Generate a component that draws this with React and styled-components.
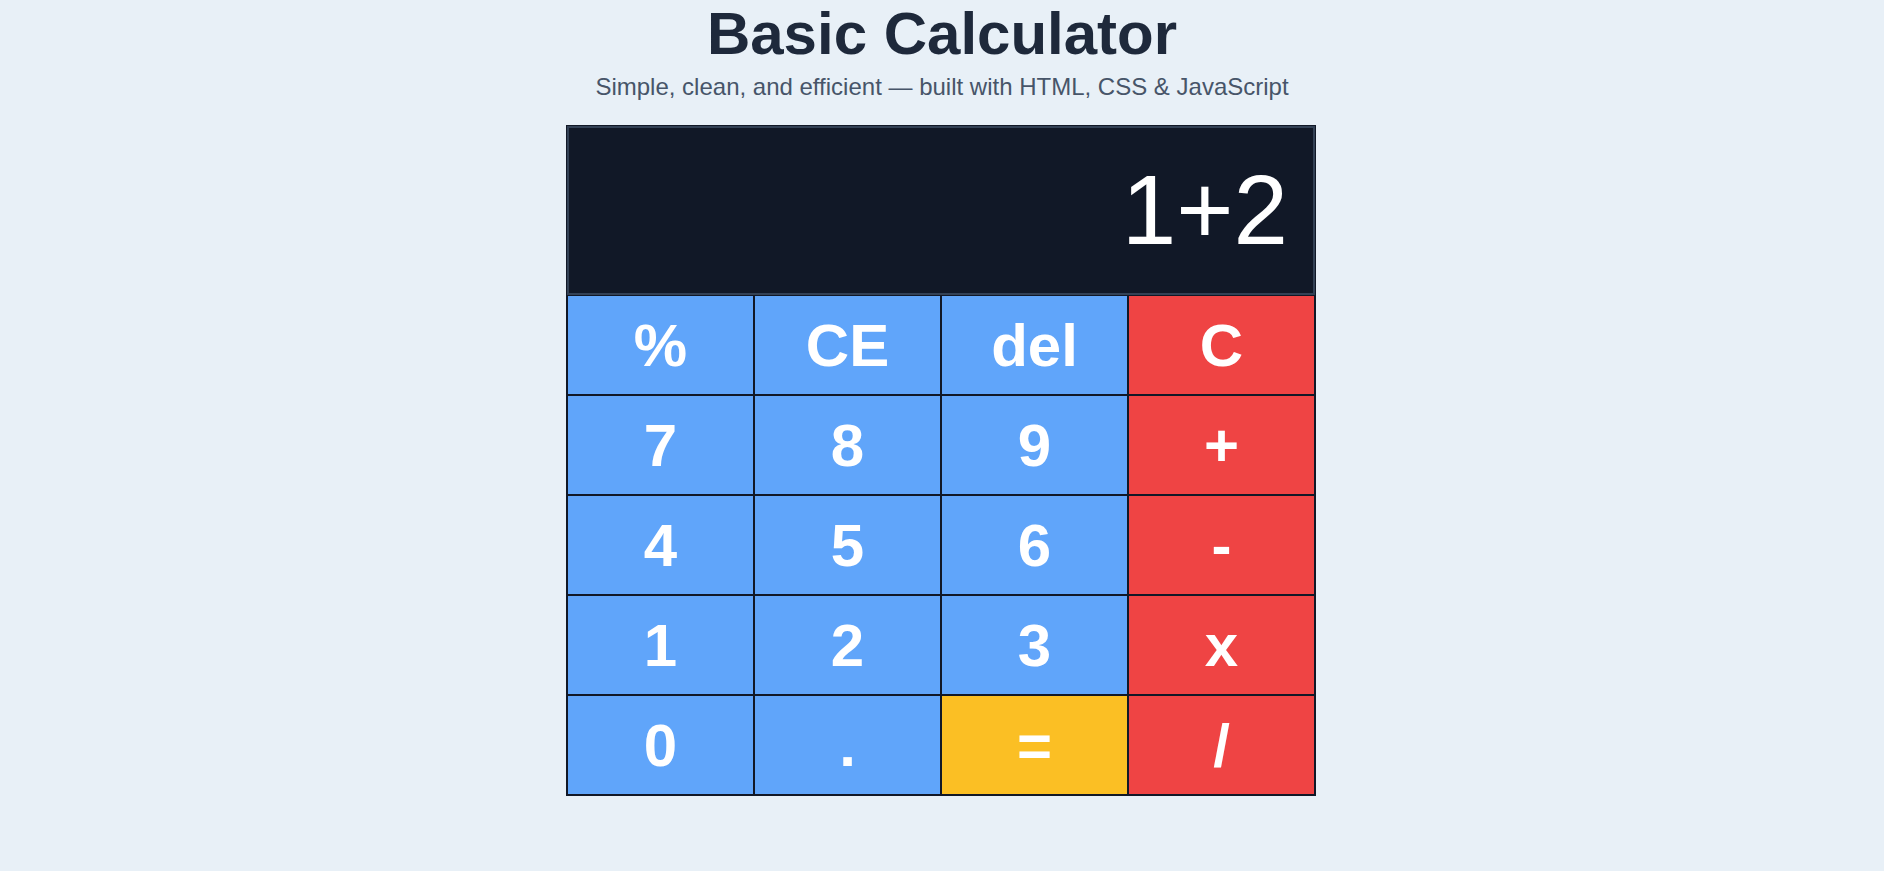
import React from 'react'
import styled, { createGlobalStyle } from 'styled-components'

const COLOR = {
  PAGE: '#e8f0f7',
  INK: '#1e293b',
  MUTED: '#475569',
  SCREEN: '#111827',
  SCREEN_EDGE: '#334155',
  LINE: '#111827',
  BLUE: '#60a5fa',
  RED: '#ef4444',
  YELLOW: '#fbbf24',
  WHITE: '#ffffff',
}

const KEYS = [
  ['%', 'num'], ['CE', 'num'], ['del', 'num'], ['C', 'op'],
  ['7', 'num'], ['8', 'num'], ['9', 'num'], ['+', 'op'],
  ['4', 'num'], ['5', 'num'], ['6', 'num'], ['-', 'op'],
  ['1', 'num'], ['2', 'num'], ['3', 'num'], ['x', 'op'],
  ['0', 'num'], ['.', 'num'], ['=', 'eq'], ['/', 'op'],
]

const GlobalStyle = createGlobalStyle`
  html, body {
    margin: 0;
    padding: 0;
    background: ${COLOR.PAGE};
    font-family: "Liberation Sans", Arial, sans-serif;
  }
`

const App = () => (
  <>
    <GlobalStyle />
    <Page>
      <Title>Basic Calculator</Title>
      <Subtitle>Simple, clean, and efficient — built with HTML, CSS &amp; JavaScript</Subtitle>
      <Calculator>
        <Display>1+2</Display>
        <Keypad>
          {KEYS.map(([label, kind]) => (
            <Key key={label} $kind={kind}>{label}</Key>
          ))}
        </Keypad>
      </Calculator>
    </Page>
  </>
)

const Page = styled.div`
  display: flex;
  flex-direction: column;
  align-items: center;
  min-height: 871px;
  box-sizing: border-box;
  padding-top: 4px;
`

const Title = styled.h1`
  margin: 0;
  font-size: 60px;
  line-height: 60px;
  font-weight: 700;
  color: ${COLOR.INK};
`

const Subtitle = styled.p`
  margin: 9px 0 0;
  font-size: 24px;
  color: ${COLOR.MUTED};
`

const Calculator = styled.div`
  margin: 24px 2px 0 0;
  width: 750px;
  box-sizing: border-box;
  border: 1px solid ${COLOR.LINE};
`

const Display = styled.div`
  display: flex;
  align-items: center;
  justify-content: flex-end;
  height: 169px;
  box-sizing: border-box;
  padding: 0 25px;
  background: ${COLOR.SCREEN};
  border: 2px solid ${COLOR.SCREEN_EDGE};
  color: ${COLOR.WHITE};
  font-size: 98px;
`

const Keypad = styled.div`
  display: grid;
  grid-template-columns: repeat(4, 1fr);
  grid-auto-rows: 100px;
`

const keyColor = {
  num: COLOR.BLUE,
  op: COLOR.RED,
  eq: COLOR.YELLOW,
}

const Key = styled.button`
  display: flex;
  align-items: center;
  justify-content: center;
  padding: 0;
  margin: 0;
  box-sizing: border-box;
  border: 1px solid ${COLOR.LINE};
  background: ${({ $kind }) => keyColor[$kind]};
  color: ${COLOR.WHITE};
  font-family: "Liberation Sans", Arial, sans-serif;
  font-size: 60px;
  font-weight: 700;
  cursor: pointer;

  &:hover {
    opacity: 0.9;
  }
`

export default App
